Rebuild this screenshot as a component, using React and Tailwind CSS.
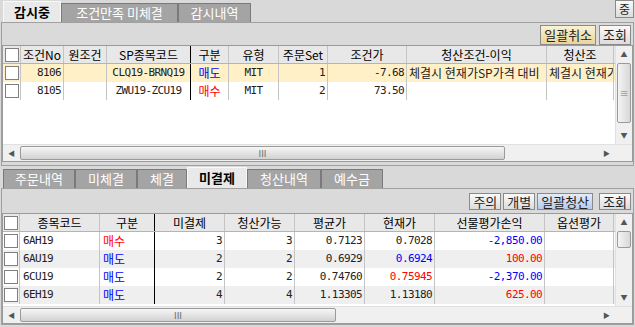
import React from "react";

const topCols = [
  { w: 18, label: "" },
  { w: 43, label: "조건No" },
  { w: 43, label: "원조건" },
  { w: 84, label: "SP종목코드", thick: true },
  { w: 38, label: "구분" },
  { w: 50, label: "유형" },
  { w: 49, label: "주문Set" },
  { w: 79, label: "조건가" },
  { w: 140, label: "청산조건-이익" },
  { w: 67, label: "청산조" },
];

const topRows = [
  {
    bg: "bg-[#fff0c8]",
    cells: [
      { t: "8106", a: "r" },
      { t: "" },
      { t: "CLQ19-BRNQ19", a: "c" },
      { t: "매도", a: "c", c: "text-[#0000ff]" },
      { t: "MIT", a: "c" },
      { t: "1", a: "r" },
      { t: "-7.68", a: "r" },
      { t: "체결시 현재가SP가격 대비", a: "l" },
      { t: "체결시 현재가SP가격 대비", a: "l" },
    ],
  },
  {
    bg: "bg-white",
    cells: [
      { t: "8105", a: "r" },
      { t: "" },
      { t: "ZWU19-ZCU19", a: "c" },
      { t: "매수", a: "c", c: "text-[#ff0000]" },
      { t: "MIT", a: "c" },
      { t: "2", a: "r" },
      { t: "73.50", a: "r" },
      { t: "", a: "l" },
      { t: "", a: "l" },
    ],
  },
];

const botCols = [
  { w: 17, label: "" },
  { w: 80, label: "종목코드" },
  { w: 55, label: "구분", thick: true },
  { w: 70, label: "미결제" },
  { w: 70, label: "청산가능" },
  { w: 70, label: "평균가" },
  { w: 70, label: "현재가" },
  { w: 110, label: "선물평가손익" },
  { w: 69, label: "옵션평가" },
];

const blue = "text-[#0000ff]";
const red = "text-[#ff0000]";

const botRows = [
  ["6AH19", "매수", red, "3", "3", "0.7123", "0.7028", "", "-2,850.00", blue, "bg-white"],
  ["6AU19", "매도", blue, "2", "2", "0.6929", "0.6924", blue, "100.00", red, "bg-[#efefef]"],
  ["6CU19", "매도", blue, "2", "2", "0.74760", "0.75945", red, "-2,370.00", blue, "bg-white"],
  ["6EH19", "매도", blue, "4", "4", "1.13305", "1.13180", "", "625.00", red, "bg-[#efefef]"],
];

// latin text and numbers are drawn narrow, like the grid font of the original
const isLatin = (t) => /^[\x00-\x7f]+$/.test(t);
const mono = "font-['DejaVu_Sans_Mono',monospace] text-[11px] tracking-[-0.6px]";

function CheckBox() {
  return <div className="w-[14px] h-[14px] bg-white border border-[#808080]" />;
}

function Tab({ label, active, w }) {
  return (
    <div
      className={
        active
          ? "h-[21px] flex items-center justify-center bg-[#e9e9e9] border border-b-0 border-[#f8f8f8] text-black font-bold text-[13px]"
          : "h-[19px] flex items-center justify-center bg-[#a4a4a4] border border-b-0 border-[#7a7a7a] text-white text-[13px]"
      }
      style={{ width: w }}
    >
      {label}
    </div>
  );
}

function Btn({ label, kind, h = 20 }) {
  const cls =
    kind === "gold"
      ? "bg-gradient-to-b from-[#fbf1d4] to-[#e9d49a] border-[#8a8a8a]"
      : kind === "blue"
      ? "bg-gradient-to-b from-[#e4ecf8] to-[#b8cbe8] border-[#8a8a8a]"
      : "bg-gradient-to-b from-[#fafafa] to-[#dcdcdc] border-[#8a8a8a]";
  return (
    <div
      className={`${cls} border px-[3px] flex items-center justify-center text-[13px] text-[#222] leading-none`}
      style={{ height: h }}
    >
      {label}
    </div>
  );
}

function VScroll({ thumb }) {
  return (
    <div className="w-[17px] bg-[#f0f0f0] border-l border-[#e0e0e0] flex flex-col items-center">
      <div className="h-[17px] flex items-center justify-center text-[#555] text-[7px]">▲</div>
      <div className="flex-1 w-[14px] flex flex-col">
        <div
          className="w-[14px] bg-gradient-to-r from-[#f4f4f4] to-[#d8d8d8] border border-[#9a9a9a] rounded-[2px] flex items-center justify-center text-[#777] text-[9px] leading-none"
          style={{ height: thumb }}
        >
          {thumb > 30 ? "≡" : ""}
        </div>
      </div>
      <div className="h-[17px] flex items-center justify-center text-[#555] text-[7px]">▼</div>
    </div>
  );
}

function HScroll({ thumb }) {
  return (
    <div className="h-[17px] bg-[#f0f0f0] border-t border-[#e0e0e0] flex items-center">
      <div className="w-[17px] flex items-center justify-center text-[#555] text-[7px]">◀</div>
      <div className="flex-1 h-[14px] relative">
        <div
          className="h-[14px] bg-gradient-to-b from-[#f6f6f6] to-[#d2d2d2] border border-[#9a9a9a] rounded-[2px] flex items-center justify-center text-[#666] text-[9px] leading-none"
          style={{ width: thumb }}
        >
          III
        </div>
      </div>
      <div className="w-[17px] flex items-center justify-center text-[#555] text-[7px]">▶</div>
      <div className="w-[17px]" />
    </div>
  );
}

function align(a) {
  if (a === "r") return "justify-end pr-[2px]";
  if (a === "c") return "justify-center";
  return "justify-start pl-[2px]";
}

function HeaderRow({ cols }) {
  return (
    <div className="flex h-[18px] bg-[#e8e8e8] border-b border-[#b4b4b4]">
      {cols.map((c, i) => (
        <div
          key={i}
          className={`shrink-0 flex items-center justify-center overflow-hidden whitespace-nowrap border-r ${
            c.thick ? "border-black" : "border-[#c4c4c4]"
          } text-[12px] text-black`}
          style={{ width: c.w }}
        >
          {i === 0 ? <CheckBox /> : c.label}
        </div>
      ))}
    </div>
  );
}

function Cell({ c, col, pad }) {
  return (
    <div
      className={`shrink-0 flex items-center overflow-hidden whitespace-nowrap border-r ${
        col.thick ? "border-black" : "border-[#c4c4c4]"
      } ${pad || align(c.a)} ${c.c || "text-[#222]"} ${isLatin(c.t) ? mono : "text-[12px]"}`}
      style={{ width: col.w }}
    >
      {c.t}
    </div>
  );
}

export default function App() {
  return (
    <div className="w-[635px] h-[327px] bg-[#d9d9d9] overflow-hidden font-['Noto_Sans_CJK_KR',sans-serif] text-[12px] text-[#222] flex flex-col">
      {/* top tabs */}
      <div className="h-[22px] flex items-end justify-between pl-[3px]">
        <div className="flex items-end">
          <Tab label="감시중" active w={58} />
          <Tab label="조건만족 미체결" w={117} />
          <Tab label="감시내역" w={73} />
        </div>
        <div className="self-start mr-[1px] h-[18px] w-[19px] bg-gradient-to-b from-[#fafafa] to-[#dcdcdc] border border-[#8a8a8a] flex items-center justify-center text-[12px]">
          중
        </div>
      </div>

      {/* top panel */}
      <div className="mx-[1px] border-x border-t border-[#a0a0a0] bg-[#dadada] flex flex-col">
        <div className="h-[22px] flex items-center justify-end gap-[3px] pr-[2px] pt-[1px]">
          <Btn label="일괄취소" kind="gold" />
          <Btn label="조회" />
        </div>
        <div className="h-[117px] bg-white border border-[#9a9a9a] flex flex-col">
          <div className="flex-1 flex">
            <div className="flex-1 flex flex-col overflow-hidden">
              <HeaderRow cols={topCols} />
              {topRows.map((r, ri) => (
                <div key={ri} className={`flex h-[18px] ${r.bg}`}>
                  <div className="w-[18px] shrink-0 flex items-center justify-center border-r border-[#c4c4c4]">
                    <CheckBox />
                  </div>
                  {r.cells.map((c, ci) => (
                    <Cell key={ci} c={c} col={topCols[ci + 1]} />
                  ))}
                </div>
              ))}
            </div>
            <VScroll thumb={60} />
          </div>
          <HScroll thumb={485} />
        </div>
      </div>
      <div className="mx-[1px] h-[4px] border-x border-b border-[#a0a0a0] bg-[#dadada]" />

      {/* bottom tabs */}
      <div className="h-[22px] flex items-end pl-[3px]">
        <Tab label="주문내역" w={72} />
        <Tab label="미체결" w={62} />
        <Tab label="체결" w={50} />
        <Tab label="미결제" active w={60} />
        <Tab label="청산내역" w={74} />
        <Tab label="예수금" w={62} />
      </div>

      {/* bottom panel */}
      <div className="flex-1 mx-[1px] mb-[2px] border border-[#a0a0a0] bg-[#dadada] flex flex-col">
        <div className="h-[24px] flex items-center justify-end pr-[2px]">
          <div className="flex gap-[2px]">
            <Btn label="주의" h={17} />
            <Btn label="개별" h={17} />
            <Btn label="일괄청산" kind="blue" h={17} />
          </div>
          <div className="ml-[6px]">
            <Btn label="조회" h={17} />
          </div>
        </div>
        <div className="flex-1 bg-white border border-[#9a9a9a] flex flex-col">
          <div className="flex-1 flex">
            <div className="flex-1 flex flex-col overflow-hidden">
              <HeaderRow cols={botCols} />
              {botRows.map((r, ri) => {
                const cells = [
                  { t: r[0], a: "l" },
                  { t: r[1], a: "l", c: r[2] },
                  { t: r[3], a: "r" },
                  { t: r[4], a: "r" },
                  { t: r[5], a: "r" },
                  { t: r[6], a: "r", c: r[7] },
                  { t: r[8], a: "r", c: r[9] },
                  { t: "", a: "r" },
                ];
                return (
                  <div key={ri} className={`flex h-[18px] ${r[10]}`}>
                    <div className="w-[17px] shrink-0 flex items-center justify-center border-r border-[#c4c4c4]">
                      <CheckBox />
                    </div>
                    {cells.map((c, ci) => (
                      <Cell
                        key={ci}
                        c={c}
                        col={botCols[ci + 1]}
                        pad={c.a === "l" ? "justify-start pl-[3px]" : null}
                      />
                    ))}
                  </div>
                );
              })}
            </div>
            <VScroll thumb={17} />
          </div>
          <HScroll thumb={316} />
        </div>
      </div>
    </div>
  );
}
